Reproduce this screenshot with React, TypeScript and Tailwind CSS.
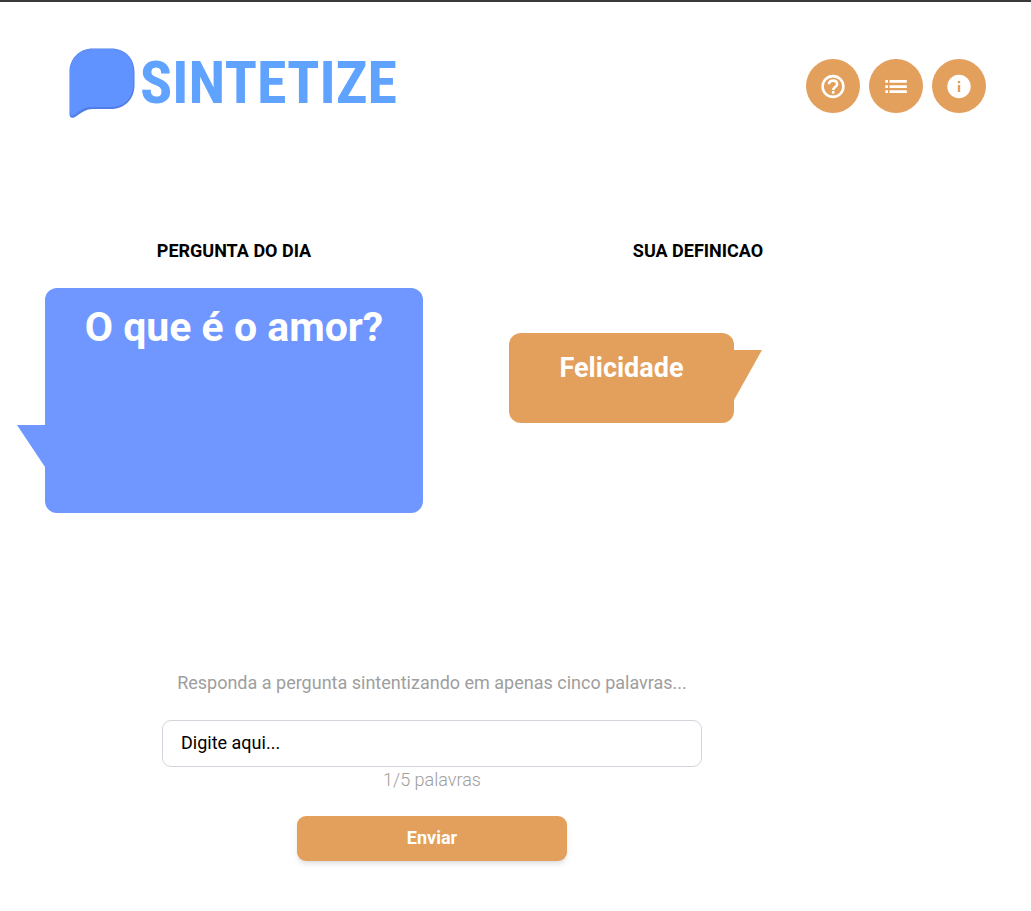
import { useState } from "react";
import type { ReactNode } from "react";

function Logo() {
  return (
    <a href="#" className="flex items-start gap-[5px] text-[#60a3ff]" aria-label="Sintetize">
      <svg width="66" height="70" viewBox="0 0 66 70" aria-hidden="true">
        <path
          d="M24 0.500H42C56 0.500 65.500 10 65.500 24V37C65.500 51 56 61 42 61H24C16 61 11 66 5 69.500C2 70.500 0.500 69 0.500 66V24C0.500 11 10 0.500 24 0.500Z"
          fill="#507de6"
        />
        <path
          d="M24 1H42C56 1 64.500 10 64.500 23V36C64.500 50 55 59 42 59H22C14 59 10 64 4.500 67.500C2 68.500 1 67 1 64.500V24C1 11 10 1 24 1Z"
          fill="#6093ff"
        />
      </svg>
      <span className="font-['Roboto_Condensed','Liberation_Sans_Narrow',Roboto,sans-serif] text-[60px] leading-[70px] font-bold">
        SINTETIZE
      </span>
    </a>
  );
}

function HelpIcon() {
  return (
    <svg width="28" height="28" viewBox="0 0 28 28" fill="none" aria-hidden="true">
      <circle cx="14" cy="14.500" r="10.400" stroke="currentColor" strokeWidth="2.600" />
      <path
        d="M10 12.300C10 10 11.700 8.600 14 8.600C16.400 8.600 18.100 10 18.100 12.200C18.100 15 14.200 15.100 14.200 18"
        stroke="currentColor"
        strokeWidth="2.600"
      />
      <rect x="12.900" y="19" width="2.600" height="2.600" fill="currentColor" />
    </svg>
  );
}

function ListIcon() {
  return (
    <svg width="28" height="28" viewBox="0 0 28 28" fill="currentColor" aria-hidden="true">
      <path d="M3.300 8H6V10.700H3.300ZM3.300 13.200H6V15.900H3.300ZM3.300 18.200H6V20.900H3.300Z" />
      <path d="M7.500 8H24.800V10.700H7.500ZM7.500 13.200H24.800V15.900H7.500ZM7.500 18.200H24.800V20.900H7.500Z" />
    </svg>
  );
}

function InfoIcon() {
  return (
    <svg width="28" height="28" viewBox="0 0 28 28" aria-hidden="true">
      <circle cx="14" cy="14.500" r="11.700" fill="currentColor" />
      <path d="M12.800 9H15.200V11.200H12.800ZM12.800 13H15.200V20H12.800Z" fill="#e39f5c" />
    </svg>
  );
}

function RoundButton({ label, children }: { label: string; children: ReactNode }) {
  return (
    <button
      type="button"
      aria-label={label}
      className="flex size-[54px] items-center justify-center rounded-full bg-[#e39f5c] text-white"
    >
      {children}
    </button>
  );
}

export default function App() {
  const [answer, setAnswer] = useState("");

  return (
    <div className="border-t-2 border-[#3b393b] bg-white font-[Roboto,sans-serif] text-lg text-black">
      <header className="flex items-start justify-between pt-[46px] pr-[45px] pl-[69px]">
        <Logo />
        <nav className="flex gap-[9px] pt-[11px]">
          <RoundButton label="Ajuda">
            <HelpIcon />
          </RoundButton>
          <RoundButton label="Lista">
            <ListIcon />
          </RoundButton>
          <RoundButton label="Sobre">
            <InfoIcon />
          </RoundButton>
        </nav>
      </header>

      <main>
        <div className="flex items-start gap-[86px] px-[45px] pt-[119px]">
          <section className="flex w-[378px] flex-col items-center gap-[24px]">
            <h2 className="font-bold leading-[27px]">PERGUNTA DO DIA</h2>
            <div className="relative h-[225px] w-full rounded-xl bg-[#6f97ff] pt-[14px] text-center">
              <p className="text-[41px] leading-[50px] font-bold text-white">O que é o amor?</p>
              <svg
                className="absolute top-[137px] right-full"
                width="28"
                height="42"
                viewBox="0 0 28 42"
                aria-hidden="true"
              >
                <path d="M0 0H28V42Z" fill="#6f97ff" />
              </svg>
            </div>
          </section>

          <section className="flex w-[378px] flex-col gap-[69px]">
            <h2 className="text-center font-bold leading-[27px]">SUA DEFINICAO</h2>
            <div className="relative h-[90px] w-[225px] rounded-xl bg-[#e39f5c] pt-[18px] text-center">
              <p className="text-[27px] leading-[34px] font-bold text-white">Felicidade</p>
              <svg
                className="absolute top-[17px] left-full"
                width="28"
                height="50"
                viewBox="0 0 28 50"
                aria-hidden="true"
              >
                <path d="M0 0H28L0 50Z" fill="#e39f5c" />
              </svg>
            </div>
          </section>
        </div>

        <form
          className="ml-[162px] flex w-[540px] flex-col items-center pt-[156px] pb-[50px]"
          onSubmit={(event) => event.preventDefault()}
        >
          <label htmlFor="answer" className="leading-[27px] text-[#9e9e9e]">
            Responda a pergunta sintentizando em apenas cinco palavras...
          </label>
          <input
            id="answer"
            type="text"
            value={answer}
            onChange={(event) => setAnswer(event.target.value)}
            placeholder="Digite aqui..."
            className="mt-[24px] h-[47px] w-full rounded-[9px] border border-[#d1d5db] px-[18px] pb-[2px] placeholder:text-black"
          />
          <p className="font-light leading-[25px] text-[#9e9e9e]">1/5 palavras</p>
          <button
            type="submit"
            className="mt-[24px] h-[45px] w-[270px] rounded-[9px] bg-[#e39f5c] pb-[2px] font-bold text-white shadow-md"
          >
            Enviar
          </button>
        </form>
      </main>
    </div>
  );
}
